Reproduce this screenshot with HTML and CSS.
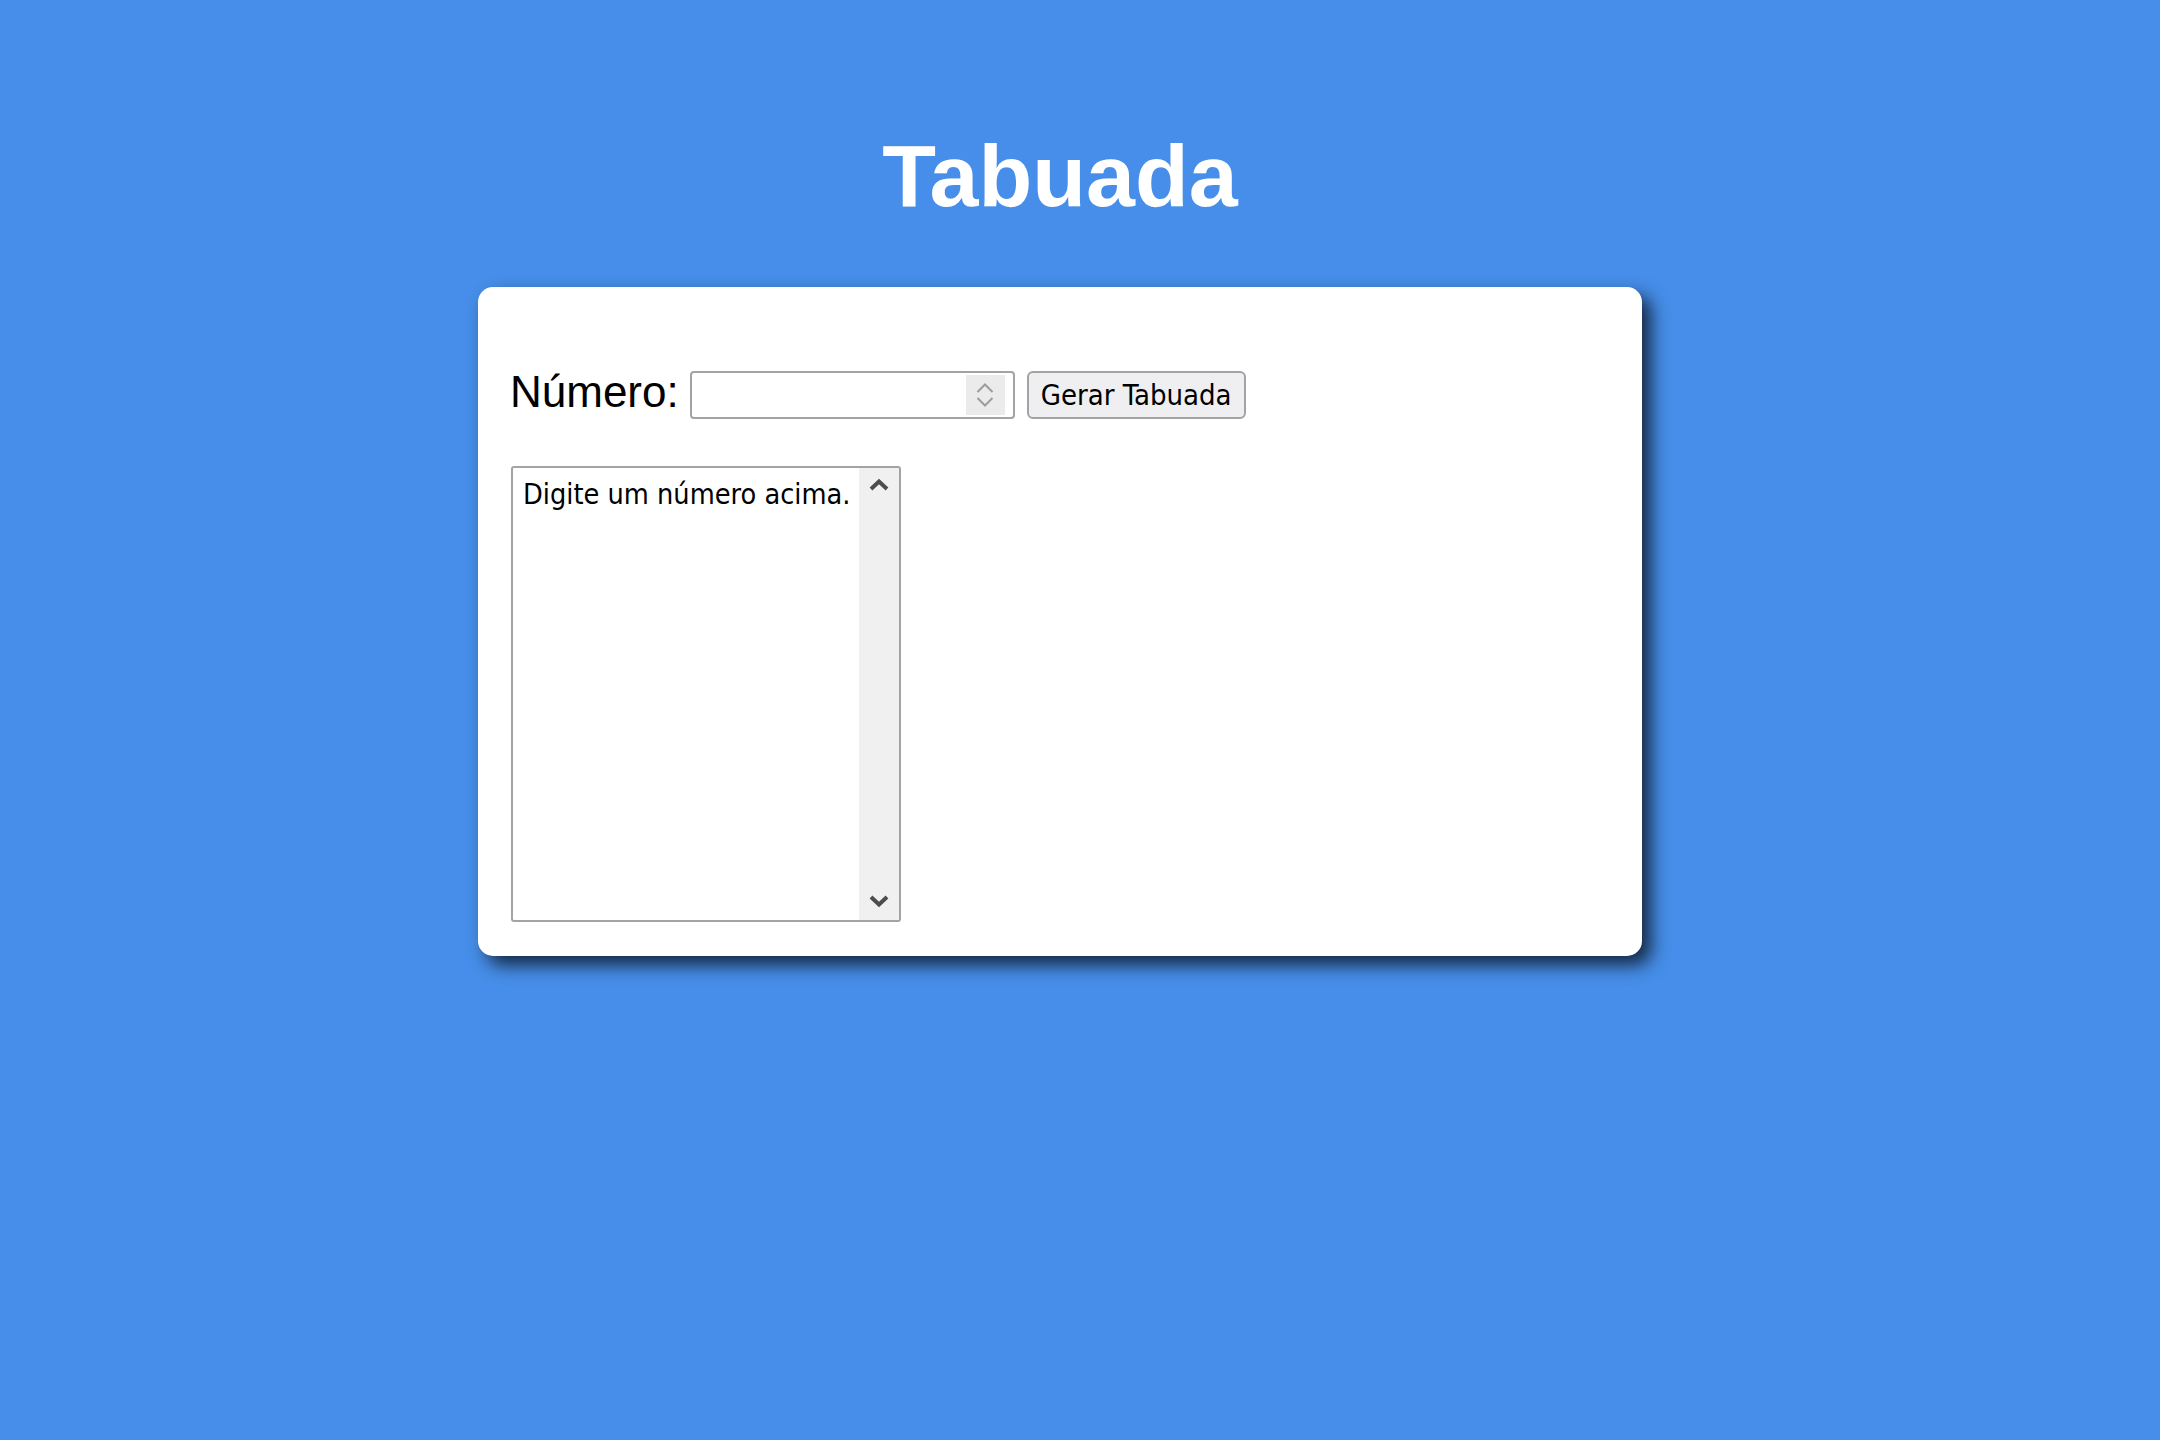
FILE: index.html
```html
<!DOCTYPE html>
<html lang="pt">
<head>
<meta charset="utf-8">
<title>Tabuada</title>
<link rel="stylesheet" href="styles.css">
</head>
<body>
  <h1 class="title">Tabuada</h1>
  <main class="card">
    <div class="row">
      <label class="label" for="numero">Número:</label>
      <div class="num-field">
        <input class="num-input" id="numero" type="text">
        <div class="spin">
          <svg width="22" height="14" viewBox="0 0 22 14"><path d="M3.5 11 L11 3.5 L18.5 11" fill="none" stroke="#9c9c9c" stroke-width="2"/></svg>
          <svg width="22" height="14" viewBox="0 0 22 14"><path d="M3.5 3 L11 10.5 L18.5 3" fill="none" stroke="#9c9c9c" stroke-width="2"/></svg>
        </div>
      </div>
      <button class="btn" type="button">Gerar Tabuada</button>
    </div>
    <div class="output">
      <textarea class="output-text" readonly>Digite um número acima.</textarea>
      <div class="scrollbar">
        <svg width="22" height="14" viewBox="0 0 22 14"><path d="M3 11 L11 3.5 L19 11" fill="none" stroke="#4d4d4d" stroke-width="4"/></svg>
        <svg width="22" height="14" viewBox="0 0 22 14"><path d="M3 3 L11 10.5 L19 3" fill="none" stroke="#4d4d4d" stroke-width="4"/></svg>
      </div>
    </div>
  </main>
</body>
</html>
```
FILE: styles.css
```css
html {
  background: #468ee9;
}
body {
  margin: 0;
  padding: 132px 40px 0 0;
  background: #468ee9;
  font-family: "Liberation Sans", Arial, sans-serif;
  min-height: 1300px;
  box-sizing: border-box;
}
.title {
  margin: 0;
  text-align: center;
  color: #fff;
  font-size: 88px;
  line-height: 88px;
  font-weight: bold;
}
.card {
  display: block;
  width: 1164px;
  box-sizing: border-box;
  margin: 67px auto 0;
  background: #fff;
  border-radius: 15px;
  padding: 84px 32px 34px 33px;
  box-shadow: 9px 9px 18px rgba(0, 0, 0, 0.72);
}
.row {
  display: flex;
  align-items: center;
  height: 48px;
}
.label {
  font-size: 44px;
  line-height: 44px;
  color: #000;
  margin-right: 11px;
  margin-bottom: 7px;
  margin-left: -1px;
}
.num-field {
  display: flex;
  align-items: center;
  width: 325px;
  height: 48px;
  box-sizing: border-box;
  border: 2px solid #a3a3a3;
  border-radius: 4px;
  background: #fff;
  padding: 3px 8px 3px 2px;
}
.num-input {
  flex: 1;
  min-width: 0;
  border: none;
  outline: none;
  background: transparent;
  font-size: 26px;
  height: 100%;
}
.spin {
  width: 39px;
  height: 40px;
  background: #ebebeb;
  display: flex;
  flex-direction: column;
  align-items: center;
  justify-content: center;
  gap: 0;
}
.spin svg {
  display: block;
}
.btn {
  margin-left: 12px;
  width: 219px;
  height: 48px;
  box-sizing: border-box;
  border: 2px solid #a3a3a3;
  border-radius: 6px;
  background: #efeff1;
  color: #000;
  font-family: "DejaVu Sans Condensed", "DejaVu Sans", sans-serif;
  font-stretch: condensed;
  font-size: 29px;
  padding: 0;
}
.output {
  display: flex;
  margin-top: 47px;
  width: 390px;
  height: 456px;
  box-sizing: border-box;
  border: 2px solid #a3a3a3;
  border-radius: 3px;
  background: #fff;
}
.output-text {
  flex: 1;
  min-width: 0;
  border: none;
  outline: none;
  resize: none;
  overflow: hidden;
  margin: 0;
  padding: 9px 0 0 10px;
  font-family: "DejaVu Sans Condensed", "DejaVu Sans", sans-serif;
  font-stretch: condensed;
  font-size: 28.6px;
  color: #000;
  background: transparent;
}
.scrollbar {
  width: 40px;
  background: #f0f0f0;
  display: flex;
  flex-direction: column;
  align-items: center;
  justify-content: space-between;
  padding: 10px 0 12px;
  box-sizing: border-box;
}
.scrollbar svg {
  display: block;
}
```
